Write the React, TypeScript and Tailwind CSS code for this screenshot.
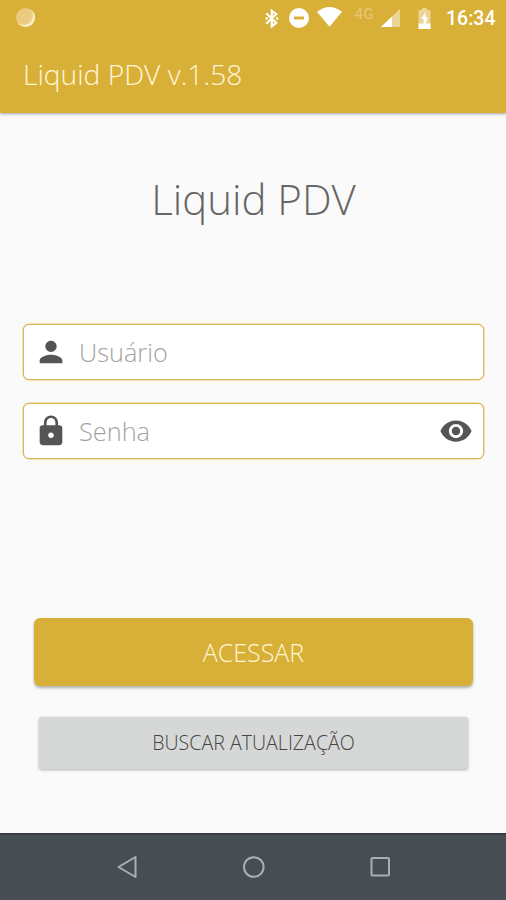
import type { ReactNode } from 'react';
import { MdLock, MdPerson, MdVisibility } from 'react-icons/md';

interface FieldProps {
  icon: ReactNode;
  placeholder: string;
  type: string;
  action?: ReactNode;
}

function StatusBar() {
  return (
    <div className="flex h-9 items-center pl-4 pr-[10px] text-white">
      <span className="mb-[2px] h-[19px] w-[19px] rounded-full bg-[#eacb80] shadow-[inset_-2px_-2px_1px_#fbeec5]" />

      {/* Bluetooth, do not disturb, wifi */}
      <svg className="ml-auto h-[21px] w-[14px]" viewBox="0 0 14 21" fill="none" aria-hidden="true">
        <path d="M1.2 5.2L11.2 14.8L6.8 18.3V2.7L11.2 6.2L1.2 15.8" stroke="currentColor" strokeWidth={2.2} />
        <circle cx="1.7" cy="10.5" r="1.3" fill="currentColor" />
        <circle cx="12.2" cy="10.5" r="1.3" fill="currentColor" />
      </svg>
      <svg className="ml-[10px] h-5 w-5" viewBox="0 0 20 20" aria-hidden="true">
        <path
          fill="currentColor"
          fillRule="evenodd"
          d="M10 0a10 10 0 1 0 0 20a10 10 0 0 0 0-20zM5 8.5h10v3H5z"
        />
      </svg>
      <svg className="ml-2 mb-[2px] h-5 w-[25px]" viewBox="0 0 25 20" fill="currentColor" aria-hidden="true">
        <path d="M0 4.8Q12.5-4.8 25 4.8L12.5 19.8z" />
      </svg>

      <span className="-mt-[8px] ml-[13px] w-[22px] font-['Roboto',sans-serif] text-[15px] leading-none tracking-[0.5px] text-[#e6c879]">
        4G
      </span>
      <svg className="ml-[4.5px] h-[18px] w-[19px]" viewBox="0 0 19 18" aria-hidden="true">
        <path d="M19 0V18H0z" fill="#ecd594" />
        <path d="M11 7.5V18H0z" fill="currentColor" />
      </svg>
      <svg className="ml-[18px] h-[21px] w-[13px]" viewBox="0 0 13 21" aria-hidden="true">
        <path d="M4 0h5v2h3.5v19h-12V2H4z" fill="#ecd594" />
        <path d="M.5 15.5h12V21H.5z" fill="currentColor" />
        <path d="M7.5 4L3 11h2.7v5h1.8L10 9.5H7.5z" fill="currentColor" />
      </svg>
      <span className="ml-[15px] mt-[2px] w-[50px] whitespace-nowrap font-['Roboto',sans-serif] text-[19.5px] font-medium leading-none">
        16:34
      </span>
    </div>
  );
}

function Field({ icon, placeholder, type, action }: FieldProps) {
  return (
    <label className="flex h-14 items-center rounded-md border border-[#dcb854] bg-white px-[10px] text-[#555] shadow-[0_0_0_0.5px_#e3c679]">
      {icon}
      <input
        type={type}
        placeholder={placeholder}
        className="ml-[11px] min-w-0 flex-1 bg-transparent pt-[2px] text-[25.3px] font-light outline-none placeholder:text-[#a3a3a3]"
      />
      {action}
    </label>
  );
}

function NavigationBar() {
  return (
    <nav className="flex h-[67px] justify-between border-t-2 border-[#383b3f] bg-[#464e53] pl-[115px] pr-[113px] pt-[20px] text-[#a9b0b1]">
      <svg className="h-6 w-6" viewBox="0 0 24 24" fill="none" stroke="currentColor" strokeWidth={2} strokeLinejoin="round">
        <path d="M20.5 2V22L3.5 12z" />
      </svg>
      <svg className="h-6 w-6" viewBox="0 0 24 24" fill="none" stroke="currentColor" strokeWidth={2}>
        <circle cx="11.8" cy="12" r="9.8" />
      </svg>
      <svg className="h-6 w-6" viewBox="0 0 24 24" fill="none" stroke="currentColor" strokeWidth={2}>
        <rect x="2.5" y="3" width="17.5" height="17.5" rx="1" />
      </svg>
    </nav>
  );
}

export default function App() {
  return (
    <div className="flex h-[900px] w-[506px] flex-col overflow-hidden bg-[#fafafa] font-['Open_Sans',sans-serif]">
      <header className="h-[113px] bg-[#d8b037] shadow-[0_1px_3px_rgba(0,0,0,0.35)]">
        <StatusBar />
        <h1 className="pl-[23px] pt-[19px] text-[28.2px] font-light leading-[38px] text-[#fff6da]">
          Liquid PDV v.1.58
        </h1>
      </header>

      <main className="flex flex-1 flex-col pl-[23px] pr-[22px]">
        <h2 className="mt-[56px] text-center text-[42px] font-light leading-[60px] text-[#666]">
          Liquid PDV
        </h2>

        <form className="mt-[95px] flex flex-col gap-[23px]">
          <Field icon={<MdPerson className="h-[34px] w-[34px]" />} type="text" placeholder="Usuário" />
          <Field
            icon={<MdLock className="h-[34px] w-[34px]" />}
            type="password"
            placeholder="Senha"
            action={<MdVisibility className="h-[34px] w-[34px]" />}
          />
        </form>

        <div className="mt-[159px] flex flex-col px-[11px]">
          <button className="h-[68px] rounded-md bg-[#d8b037] pt-[2px] text-[25px] font-light text-[#fff6da] shadow-[0_2px_3px_rgba(0,0,0,0.3)]">
            ACESSAR
          </button>
          <button className="mx-[5px] mt-[31px] h-[52px] rounded-[3px] bg-[#d6d8d7] text-[19.6px] font-light text-[#444] shadow-[0_1px_3px_rgba(0,0,0,0.3)]">
            BUSCAR ATUALIZAÇÃO
          </button>
        </div>
      </main>

      <NavigationBar />
    </div>
  );
}
